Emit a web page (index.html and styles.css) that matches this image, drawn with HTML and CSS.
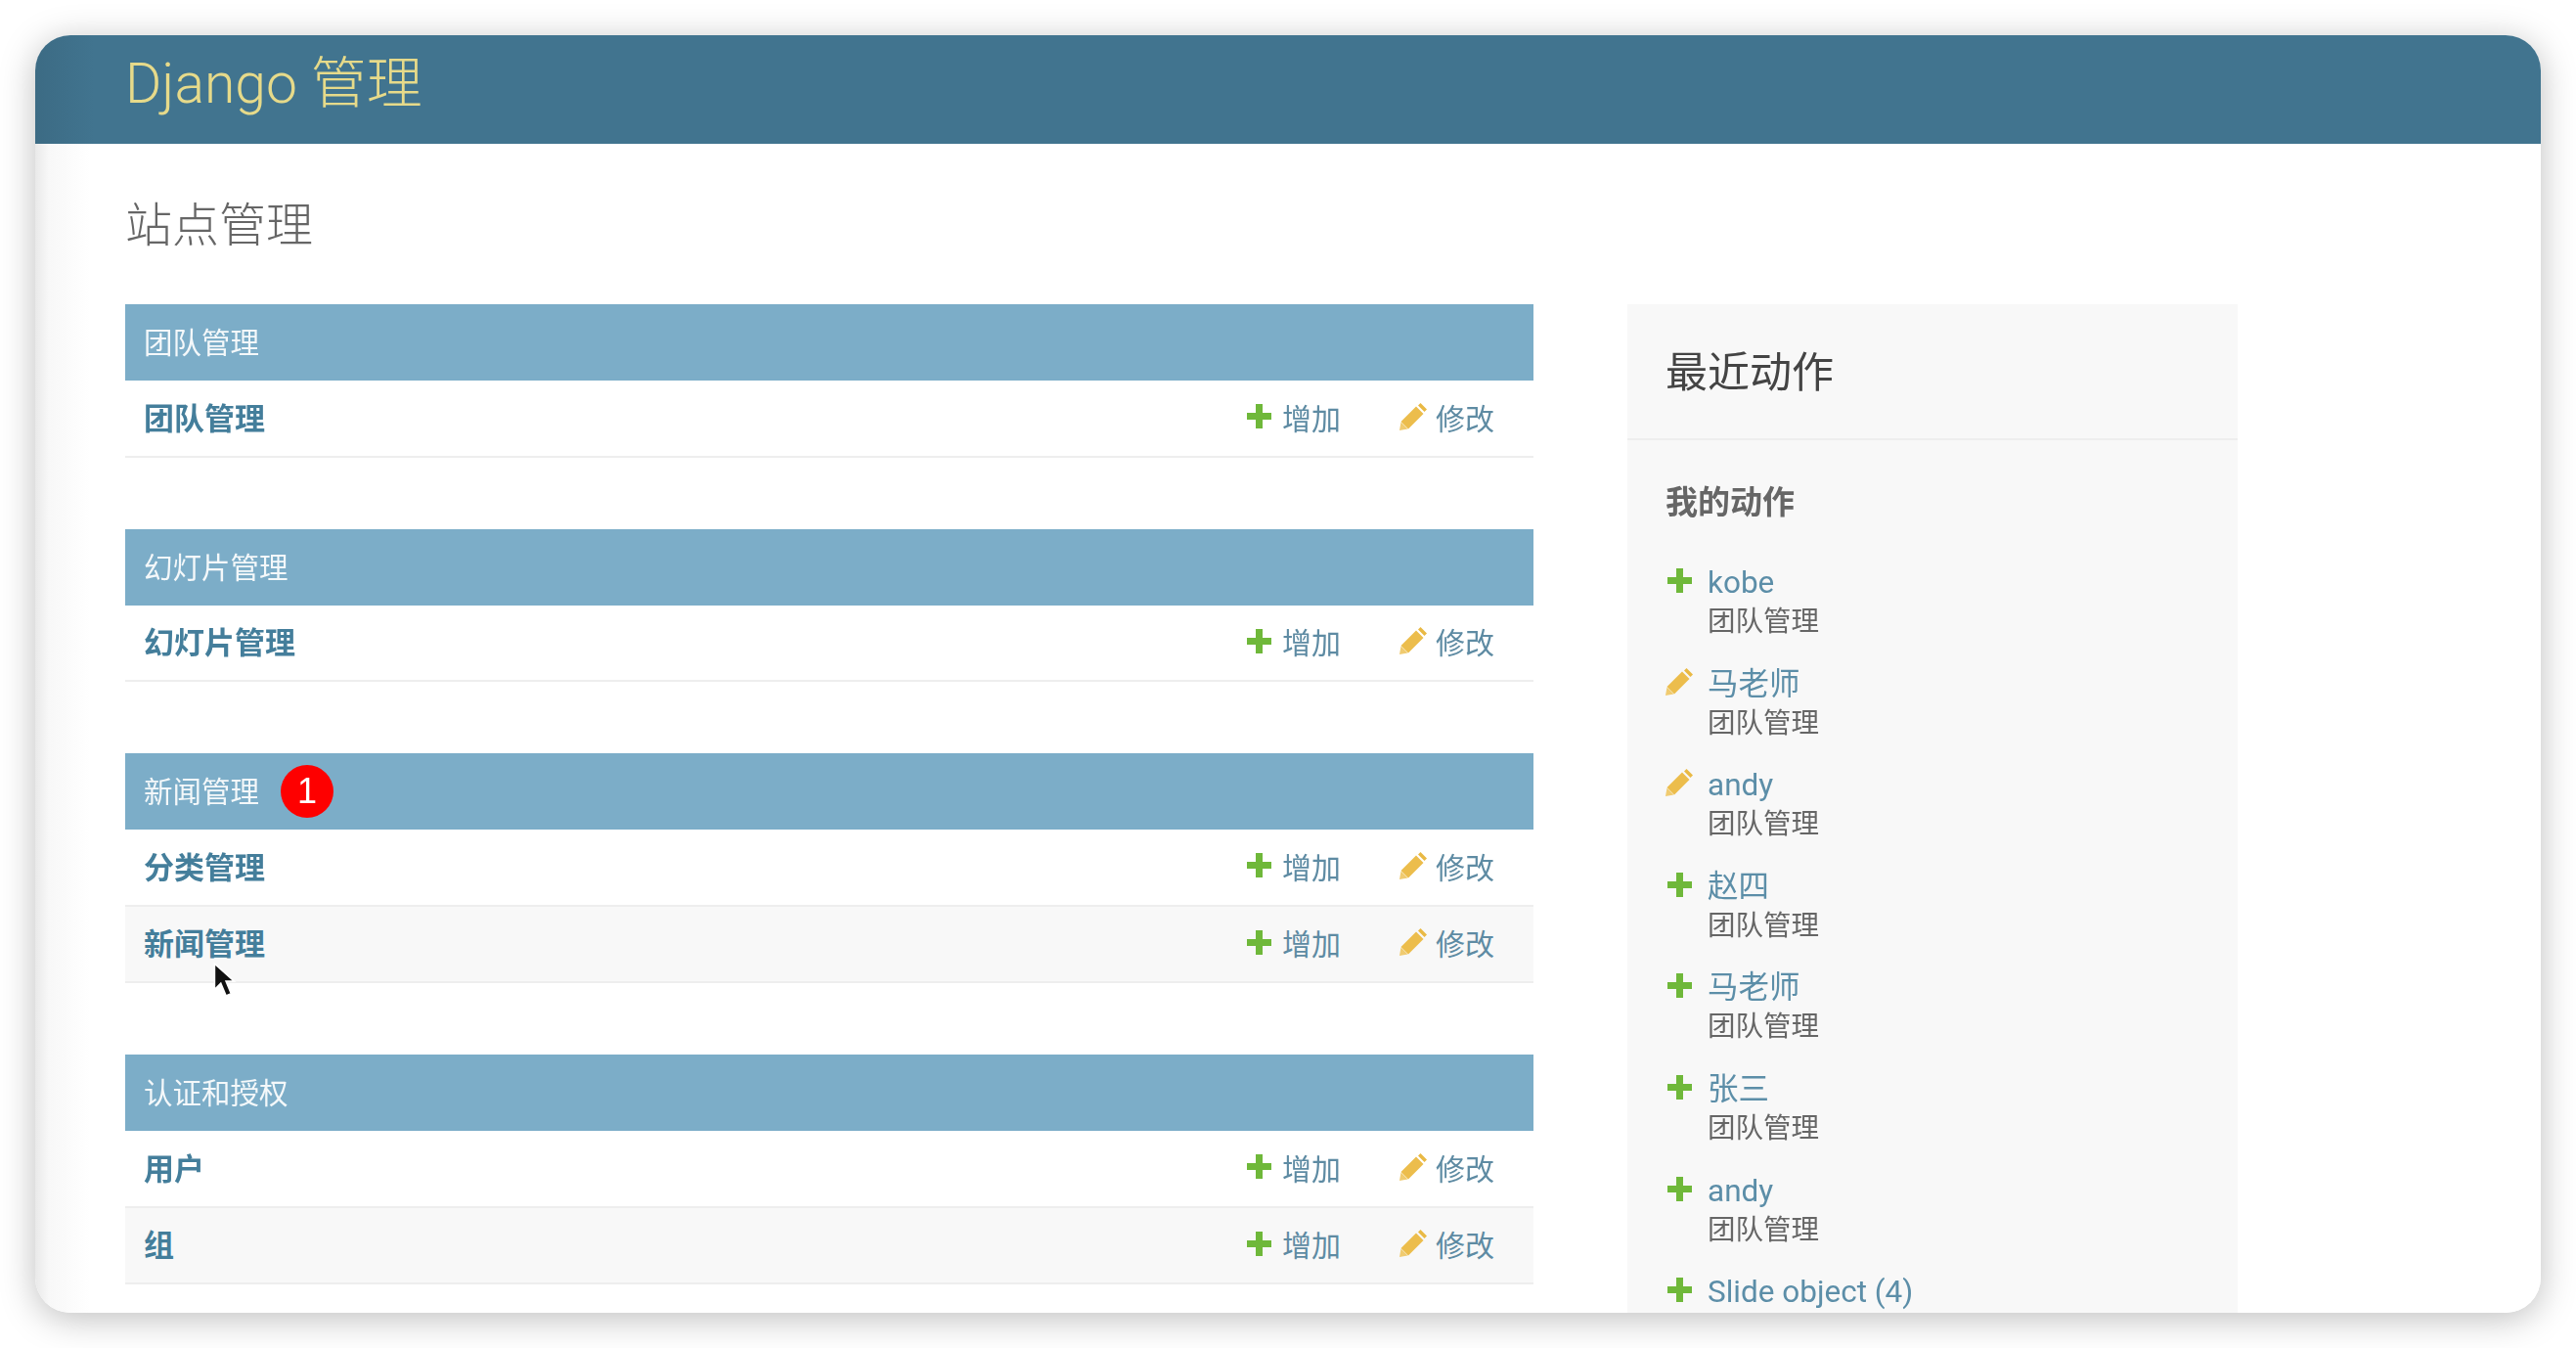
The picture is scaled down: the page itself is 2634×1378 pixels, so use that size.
FILE: index.html
```html
<!DOCTYPE html>
<html lang="zh-CN">
<head>
  <meta charset="UTF-8" />
  <title>Django 管理</title>
  <link rel="stylesheet" href="styles.css">
</head>
<body>
  <svg class="sprites" width="0" height="0">
    <symbol id="plus" viewBox="0 0 25 25">
      <path d="M9 0h7v9h9v7h-9v9H9v-9H0V9h9z" fill="#6fb83a"/>
    </symbol>
    <symbol id="pencil" viewBox="0 0 28 28">
      <path d="M21.500 0l6.500 6.500-2.500 2.500-6.500-6.500z" fill="#e9b944"/>
      <path d="M17 3.500l7.500 7.500L9 26.500 1.500 19z" fill="#ecbd4c"/>
      <path d="M1.500 19.500l7 7L0 28z" fill="#f0cb70"/>
    </symbol>
  </svg>

  <div class="window">
    <header class="topbar">
      <div class="brand">Django 管理</div>
    </header>

    <main class="content">
      <h1 class="page-title">站点管理</h1>

      <div class="columns">
        <div class="app-list">
          <section class="module">
            <h2 class="caption">团队管理</h2>
            <div class="row">
              <a class="model">团队管理</a>
              <a class="action"><svg class="icon-plus"><use href="#plus"/></svg>增加</a>
              <a class="action"><svg class="icon-pencil"><use href="#pencil"/></svg>修改</a>
            </div>
          </section>

          <section class="module">
            <h2 class="caption">幻灯片管理</h2>
            <div class="row">
              <a class="model">幻灯片管理</a>
              <a class="action"><svg class="icon-plus"><use href="#plus"/></svg>增加</a>
              <a class="action"><svg class="icon-pencil"><use href="#pencil"/></svg>修改</a>
            </div>
          </section>

          <section class="module">
            <h2 class="caption">新闻管理<span class="badge">1</span></h2>
            <div class="row">
              <a class="model">分类管理</a>
              <a class="action"><svg class="icon-plus"><use href="#plus"/></svg>增加</a>
              <a class="action"><svg class="icon-pencil"><use href="#pencil"/></svg>修改</a>
            </div>
            <div class="row alt">
              <a class="model">新闻管理</a>
              <a class="action"><svg class="icon-plus"><use href="#plus"/></svg>增加</a>
              <a class="action"><svg class="icon-pencil"><use href="#pencil"/></svg>修改</a>
              <svg class="cursor" viewBox="0 0 24 34">
                <path d="M2 1v25l6-6 5 12 5-2-5-12h8z" fill="#111" stroke="#fff" stroke-width="1.500"/>
              </svg>
            </div>
          </section>

          <section class="module">
            <h2 class="caption">认证和授权</h2>
            <div class="row">
              <a class="model">用户</a>
              <a class="action"><svg class="icon-plus"><use href="#plus"/></svg>增加</a>
              <a class="action"><svg class="icon-pencil"><use href="#pencil"/></svg>修改</a>
            </div>
            <div class="row alt">
              <a class="model">组</a>
              <a class="action"><svg class="icon-plus"><use href="#plus"/></svg>增加</a>
              <a class="action"><svg class="icon-pencil"><use href="#pencil"/></svg>修改</a>
            </div>
          </section>
        </div>

        <aside class="recent">
          <h2 class="recent-title">最近动作</h2>
          <h3 class="recent-sub">我的动作</h3>
          <ul class="actions">
            <li><svg class="icon-plus"><use href="#plus"/></svg><div><a>kobe</a><span>团队管理</span></div></li>
            <li><svg class="icon-pencil"><use href="#pencil"/></svg><div><a>马老师</a><span>团队管理</span></div></li>
            <li><svg class="icon-pencil"><use href="#pencil"/></svg><div><a>andy</a><span>团队管理</span></div></li>
            <li><svg class="icon-plus"><use href="#plus"/></svg><div><a>赵四</a><span>团队管理</span></div></li>
            <li><svg class="icon-plus"><use href="#plus"/></svg><div><a>马老师</a><span>团队管理</span></div></li>
            <li><svg class="icon-plus"><use href="#plus"/></svg><div><a>张三</a><span>团队管理</span></div></li>
            <li><svg class="icon-plus"><use href="#plus"/></svg><div><a>andy</a><span>团队管理</span></div></li>
            <li><svg class="icon-plus"><use href="#plus"/></svg><div><a>Slide object (4)</a></div></li>
          </ul>
        </aside>
      </div>
    </main>
  </div>
</body>
</html>
```

FILE: styles.css
```css
html, body {
  margin: 0;
  height: 100%;
}
body {
  box-sizing: border-box;
  height: 1378px;
  padding: 36px;
  background: #fff;
  overflow: hidden;
  font-family: Roboto, "Noto Sans CJK SC", sans-serif;
  color: #666;
}
.sprites {
  position: absolute;
}
.window {
  height: 1306px;
  border-radius: 36px;
  overflow: hidden;
  background: #fff;
  box-shadow: 0 6px 36px rgba(0, 0, 0, 0.26);
}
.topbar {
  height: 111px;
  background: linear-gradient(90deg, #3c6b84 0, #41748f 60px);
  padding-left: 92px;
  box-sizing: border-box;
}
.brand {
  font-size: 57px;
  font-weight: 300;
  line-height: 100px;
  color: #e6da8a;
  filter: blur(0.6px);
}
.content {
  height: 1195px;
  box-sizing: border-box;
  padding: 0 0 0 92px;
  background: linear-gradient(90deg, #e9e9e9 0, #f8f8f8 14px, #fff 56px);
}
.page-title {
  margin: 0 0 42px;
  padding-top: 46px;
  height: 76px;
  line-height: 76px;
  font-size: 48px;
  font-weight: 300;
  color: #666;
  filter: blur(0.6px);
}
.columns {
  display: flex;
  align-items: flex-start;
  gap: 96px;
  filter: blur(0.6px);
}
.app-list {
  width: 1440px;
  flex: none;
}
.module {
  margin-bottom: 73px;
}
.caption {
  display: flex;
  align-items: center;
  box-sizing: border-box;
  margin: 0;
  height: 78px;
  padding: 0 0 4px 19px;
  background: #7cadc8;
  color: #f4f8fa;
  font-size: 29.500px;
  font-weight: 400;
}
.badge {
  width: 54px;
  height: 54px;
  margin: 4px 0 0 22px;
  border-radius: 50%;
  background: #fe0000;
  color: #fff;
  font-family: "Liberation Sans", sans-serif;
  font-size: 36px;
  line-height: 54px;
  text-align: center;
}
.row {
  position: relative;
  display: flex;
  align-items: center;
  height: 76.500px;
  box-sizing: content-box;
  padding: 0 40px 0 19px;
  border-bottom: 2px solid #eee;
  font-size: 30px;
}
.row.alt {
  background: #f8f8f8;
}
.model {
  flex: 1;
  font-size: 31px;
  font-weight: 700;
  color: #447e9b;
  margin-top: -4px;
}
.action {
  display: flex;
  align-items: center;
  color: #5e8ba3;
  margin-top: -3px;
}
.action + .action {
  margin-left: 60px;
}
.icon-plus {
  width: 25px;
  height: 25px;
  flex: none;
  margin-right: 11px;
}
.icon-pencil {
  width: 28px;
  height: 28px;
  flex: none;
  margin-right: 9px;
}
.cursor {
  position: absolute;
  left: 89px;
  top: 57px;
  width: 26px;
  height: 36px;
}
.recent {
  width: 624px;
  flex: none;
  background: #f8f8f8;
  min-height: 1100px;
}
.recent-title {
  margin: 0;
  height: 137px;
  line-height: 140px;
  padding-left: 39px;
  border-bottom: 2px solid #eee;
  font-size: 43px;
  font-weight: 400;
  color: #444;
}
.recent-sub {
  margin: 0;
  padding: 43px 0 0 39px;
  line-height: 42px;
  font-size: 33px;
  font-weight: 700;
  color: #666;
}
.actions {
  list-style: none;
  margin: 0;
  padding: 41px 0 0 39px;
}
.actions li {
  display: flex;
  align-items: flex-start;
  height: 103.600px;
}
.actions svg {
  margin-top: 5px;
  margin-right: 16px;
  margin-left: 2px;
}
.actions .icon-pencil {
  margin-top: 3px;
  margin-left: 0;
  margin-right: 15px;
}
.actions a {
  display: block;
  font-size: 31.500px;
  line-height: 40px;
  color: #5c8ea8;
}
.actions span {
  display: block;
  margin-top: 2px;
  font-size: 28.500px;
  line-height: 36px;
  color: #666;
}
```
